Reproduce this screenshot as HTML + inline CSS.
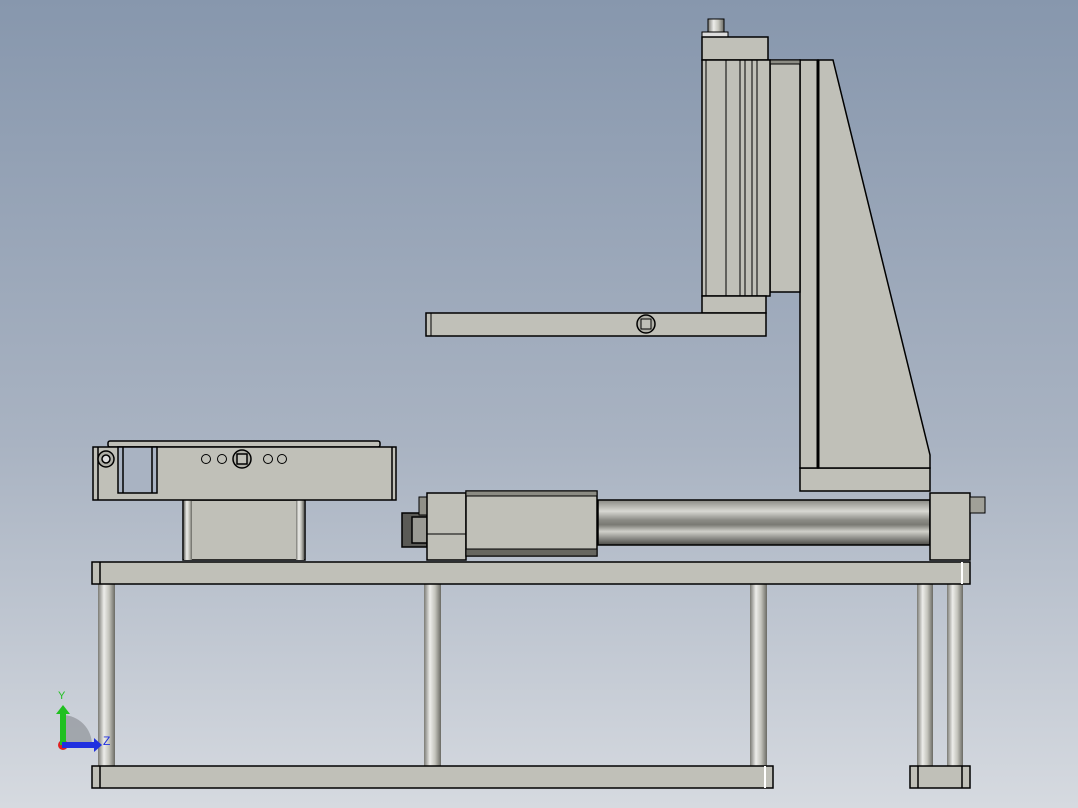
<!DOCTYPE html><html><head><style>body{margin:0}svg{display:block}</style></head><body>
<svg width="1078" height="808" xmlns="http://www.w3.org/2000/svg" font-family="Liberation Sans, sans-serif">
<defs>
<linearGradient id="bg" x1="0" y1="0" x2="0" y2="1"><stop offset="0" stop-color="#8797ad"/><stop offset="0.55" stop-color="#a9b3c2"/><stop offset="1" stop-color="#d6dae0"/></linearGradient>
<linearGradient id="post" x1="0" y1="0" x2="1" y2="0"><stop offset="0" stop-color="#7a7a74"/><stop offset="0.35" stop-color="#ededea"/><stop offset="0.65" stop-color="#c4c4bc"/><stop offset="1" stop-color="#6a6a64"/></linearGradient>
<linearGradient id="tube" x1="0" y1="0" x2="0" y2="1"><stop offset="0" stop-color="#8a8a84"/><stop offset="0.25" stop-color="#d8d8d2"/><stop offset="0.45" stop-color="#8a8a84"/><stop offset="0.55" stop-color="#7a7a74"/><stop offset="0.7" stop-color="#d0d0ca"/><stop offset="1" stop-color="#4a4a46"/></linearGradient>
</defs>
<rect width="1078" height="808" fill="url(#bg)"/>
<g stroke="#000" stroke-width="1.5" fill="#c0c0b8">
<rect x="98" y="584" width="17" height="182" fill="url(#post)" stroke="none"/>
<rect x="424" y="584" width="17" height="182" fill="url(#post)" stroke="none"/>
<rect x="750" y="584" width="17" height="182" fill="url(#post)" stroke="none"/>
<rect x="917" y="584" width="16" height="182" fill="url(#post)" stroke="none"/>
<rect x="947" y="584" width="16" height="182" fill="url(#post)" stroke="none"/>
<rect x="92" y="562" width="878" height="22"/>
<line x1="100" y1="562" x2="100" y2="584"/><line x1="962" y1="562" x2="962" y2="584" stroke="#fff" stroke-width="2"/>
<rect x="92" y="766" width="681" height="22"/>
<line x1="100" y1="766" x2="100" y2="788"/><line x1="765" y1="766" x2="765" y2="788" stroke="#fff" stroke-width="2"/>
<rect x="910" y="766" width="60" height="22"/>
<line x1="918" y1="766" x2="918" y2="788"/><line x1="962" y1="766" x2="962" y2="788"/>
<rect x="183" y="500" width="122" height="60"/>
<rect x="184" y="500" width="8" height="60" fill="url(#post)" stroke="none"/>
<rect x="296" y="500" width="8" height="60" fill="url(#post)" stroke="none"/>
<rect x="108" y="441" width="272" height="6" rx="2"/>
<rect x="93" y="447" width="303" height="53"/>
<line x1="98" y1="447" x2="98" y2="500"/><line x1="392" y1="447" x2="392" y2="500"/>
<rect x="118" y="447" width="39" height="46" fill="#a9b3c2"/>
<line x1="123" y1="447" x2="123" y2="493"/><line x1="152" y1="447" x2="152" y2="493"/>
<circle cx="106" cy="459" r="8" fill="#b0b0a8"/><circle cx="106" cy="459" r="4" fill="#ddd"/>
<circle cx="242" cy="459" r="9" fill="#b0b0a8"/><rect x="237" y="454" width="10" height="10" fill="#c0c0b8"/>
<circle cx="206" cy="459" r="4.5" fill="none" stroke-width="1"/><circle cx="222" cy="459" r="4.5" fill="none" stroke-width="1"/>
<circle cx="268" cy="459" r="4.5" fill="none" stroke-width="1"/><circle cx="282" cy="459" r="4.5" fill="none" stroke-width="1"/>
<rect x="598" y="500" width="332" height="45" fill="url(#tube)"/>
<rect x="402" y="513" width="25" height="34" fill="#5a5a56"/>
<rect x="412" y="517" width="15" height="26" fill="#9a9a94"/>
<rect x="419" y="497" width="10" height="18" fill="#909088" stroke-width="1"/>
<rect x="427" y="493" width="39" height="67"/>
<line x1="427" y1="534" x2="466" y2="534" stroke-width="1"/>
<rect x="466" y="491" width="131" height="65"/>
<rect x="466" y="491" width="131" height="5" fill="#8c8c84" stroke-width="1"/>
<rect x="466" y="549" width="131" height="7" fill="#66665f" stroke-width="1"/>
<rect x="930" y="493" width="40" height="67"/>
<rect x="970" y="497" width="15" height="16" fill="#a0a098" stroke-width="1"/>
<rect x="800" y="468" width="130" height="23"/>
<polygon points="818,60 833,60 930,455 930,468 818,468"/>
<rect x="800" y="60" width="18" height="408"/>
<line x1="818" y1="60" x2="818" y2="468" stroke-width="3"/>
<rect x="770" y="60" width="30" height="232"/>
<rect x="770" y="60" width="30" height="4" fill="#8c8c84" stroke-width="1"/>
<rect x="708" y="19" width="16" height="14" fill="url(#post)" stroke-width="1"/>
<rect x="702" y="32" width="26" height="5" fill="#ddd" stroke-width="1"/>
<rect x="702" y="37" width="66" height="23"/>
<rect x="702" y="60" width="68" height="236"/>
<line x1="706" y1="60" x2="706" y2="296" stroke-width="1"/>
<line x1="726" y1="60" x2="726" y2="296" stroke-width="1"/>
<line x1="740" y1="60" x2="740" y2="296" stroke-width="1"/>
<line x1="745" y1="60" x2="745" y2="296" stroke-width="1"/>
<line x1="752" y1="60" x2="752" y2="296" stroke-width="1"/>
<line x1="757" y1="60" x2="757" y2="296" stroke-width="1"/>
<rect x="702" y="296" width="64" height="17"/>
<rect x="426" y="313" width="340" height="23"/>
<line x1="431" y1="313" x2="431" y2="336" stroke-width="1"/>
<circle cx="646" cy="324" r="9" fill="#b0b0a8"/><rect x="641" y="319" width="10" height="10" fill="#c0c0b8" stroke-width="1"/>
</g>
<path d="M62 745 L62 715 A30 30 0 0 1 92 745 Z" fill="#8f9398" opacity="0.7"/>
<circle cx="63" cy="745" r="5" fill="#e02020"/>
<rect x="60" y="712" width="6" height="33" fill="#20c020"/><polygon points="56,714 70,714 63,705" fill="#20c020"/>
<rect x="62" y="742" width="34" height="6" fill="#2030e0"/><polygon points="94,738 94,752 102,745" fill="#2030e0"/>
<text x="58" y="699" font-size="11" fill="#20c020">Y</text>
<text x="103" y="745" font-size="12" fill="#2030e0">Z</text>
</svg>
</body></html>
